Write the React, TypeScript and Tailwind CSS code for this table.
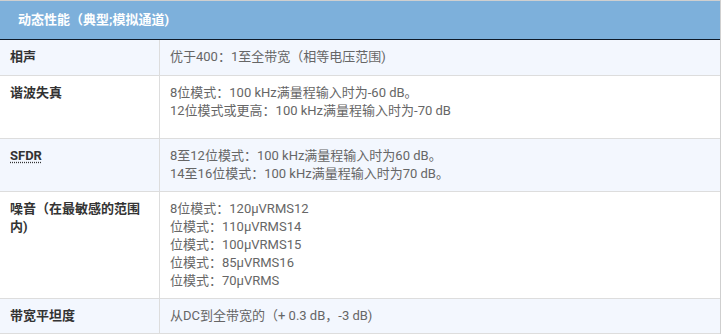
import React from 'react';

interface SpecRow {
  label: React.ReactNode;
  lines: string[];
  pad: string;     // padding per row, tuned to the reference heights
  tint: boolean;   // light blue stripe
}

const rows: SpecRow[] = [
  {
    label: '相声',
    lines: ['优于400：1至全带宽（相等电压范围)'],
    pad: 'pt-2 pb-[9px]',
    tint: true,
  },
  {
    label: '谐波失真',
    lines: ['8位模式：100 kHz满量程输入时为-60 dB。', '12位模式或更高：100 kHz满量程输入时为-70 dB'],
    pad: 'pt-2 pb-[18px]',
    tint: false,
  },
  {
    label: (
      <abbr title="Spurious-Free Dynamic Range" className="underline decoration-dotted underline-offset-2">
        SFDR
      </abbr>
    ),
    lines: ['8至12位模式：100 kHz满量程输入时为60 dB。', '14至16位模式：100 kHz满量程输入时为70 dB。'],
    pad: 'py-2',
    tint: true,
  },
  {
    label: '噪音（在最敏感的范围内)',
    lines: ['8位模式：120μVRMS12', '位模式：110μVRMS14', '位模式：100μVRMS15', '位模式：85μVRMS16', '位模式：70μVRMS'],
    pad: 'py-2',
    tint: false,
  },
  {
    label: '带宽平坦度',
    lines: ['从DC到全带宽的（+ 0.3 dB，-3 dB)'],
    pad: 'py-2',
    tint: true,
  },
];

export default function App() {
  return (
    <div className="w-[723px] h-[334px] bg-white font-['Roboto','Noto_Sans_CJK_SC',sans-serif] text-[13px] leading-[18px]">
      <div className="w-[721px] border-t border-r border-[#cfcfcf]">
        {/* Header */}
        <div className="h-[39px] bg-[#7db0db] border-b border-[#0f1a28] pl-[18px] flex items-center">
          <span className="text-white font-bold">动态性能（典型;模拟通道)</span>
        </div>

        {/* Rows */}
        {rows.map((row, i) => (
          <div
            key={i}
            className={`flex border-b border-[#dddddd] ${row.tint ? 'bg-[#f3f7fe]' : 'bg-white'}`}
          >
            <div className={`w-[160px] shrink-0 border-r border-[#dddddd] pl-[10px] pr-2 font-bold text-[#333333] ${row.pad}`}>
              {row.label}
            </div>
            <div className={`flex-1 pl-[10px] pr-2 text-[#666666] ${row.pad}`}>
              {row.lines.map((line, j) => (
                <div key={j}>{line}</div>
              ))}
            </div>
          </div>
        ))}
      </div>
    </div>
  );
}
